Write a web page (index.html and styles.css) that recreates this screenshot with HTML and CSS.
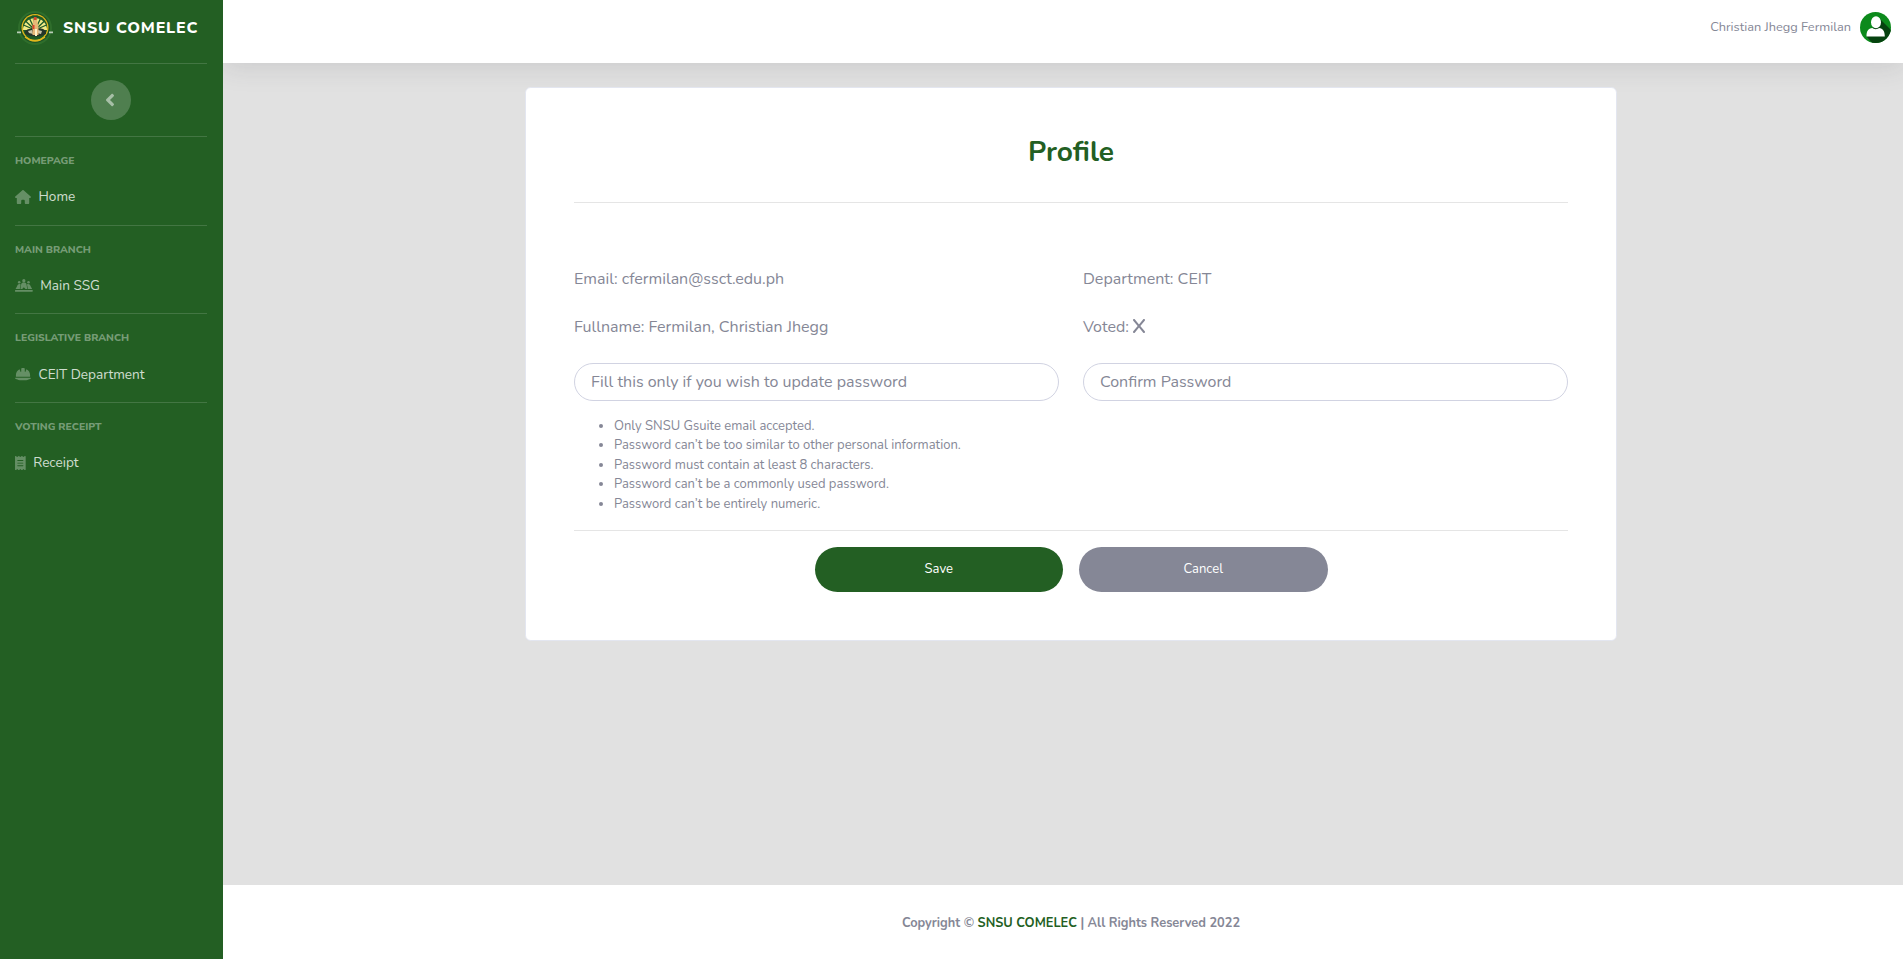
FILE: index.html
```html
<!DOCTYPE html>
<html lang="en">
<head>
<meta charset="utf-8">
<title>SNSU COMELEC - Profile</title>
<link rel="stylesheet" href="styles.css">
</head>
<body>
<div class="wrapper">
  <nav class="sidebar">
    <a class="brand">
      <svg class="brand-logo" viewBox="0 0 36 36">
        <circle cx="18" cy="18" r="17" fill="#2f6e2c"/>
        <circle cx="18" cy="18" r="15" fill="#1d5326"/>
        <circle cx="18" cy="17.5" r="13.5" fill="#e3b81c"/>
        <circle cx="18" cy="17.5" r="12.2" fill="#1f5a25"/>
        <path d="M6 20a12 12 0 0 1 24 0z" fill="#f2ea86"/>
        <path d="M18 20 6.5 15M18 20 8.5 11M18 20 12 7.500M18 20 16 5.500M18 20 20 5.500M18 20 24 7.500M18 20 27.500 11M18 20 29.500 15" stroke="#1d5a2a" stroke-width="1.300"/>
        <path d="M8 21q5-4 10-1 6-4 11 1v3q-10 5-21 0z" fill="#26352a"/>
        <path d="M11 21l4-1 1 4-4-1zM21 20l4 1-1 3-4-1z" fill="#c9c4a8"/>
        <path d="M16.500 8q2-2 3 0l2 9v8h-6v-8z" fill="#e7b878"/>
        <path d="M17 7h2.500v3H17zM15.500 15h2v4h-2z" fill="#d9442b"/>
        <path d="M18 19h2v7h-2z" fill="#fff0c8"/>
        <path d="M8 27q10 8 20 0" fill="none" stroke="#e3b81c" stroke-width="1.400"/>
        <path d="M0 21.500h4v1.700H0zM32 21.500h4v1.700h-4z" fill="#b9cdb8"/>
      </svg>
      <span class="brand-text">SNSU COMELEC</span>
    </a>
    <div class="toggle-row">
      <button class="toggle" aria-label="Collapse sidebar">
        <svg viewBox="0 0 256 512" width="10" height="20"><path d="M31.7 239l136-136c9.400-9.400 24.600-9.400 33.900 0l22.600 22.600c9.400 9.400 9.400 24.600 0 33.900L127.900 256l96.400 96.400c9.400 9.400 9.400 24.600 0 33.900L201.700 409c-9.400 9.400-24.600 9.400-33.900 0l-136-136c-9.500-9.400-9.500-24.600-.1-34z"/></svg>
      </button>
    </div>
    <section class="nav-group">
      <div class="nav-heading">HOMEPAGE</div>
      <a class="nav-link">
        <svg viewBox="0 0 576 512" width="16" height="14.2"><path d="M575.800 255.500c0 18-15 32.100-32 32.100h-32l.7 160.200c0 2.700-.2 5.400-.5 8.100V472c0 22.100-17.900 40-40 40H392c-22.100 0-40-17.900-40-40V384c0-17.700-14.300-32-32-32H256c-17.700 0-32 14.300-32 32v88c0 22.100-17.900 40-40 40H104c-22.100 0-40-17.900-40-40V287.600H32c-18 0-32-14-32-32.100c0-9 3-17 10-24L266.400 8c7-7 15-8 22-8s15 2 21 7L564.800 231.500c8 7 12 15 11 24z"/></svg>
        <span>Home</span>
      </a>
    </section>
    <section class="nav-group">
      <div class="nav-heading">MAIN BRANCH</div>
      <a class="nav-link">
        <svg viewBox="0 0 640 512" width="17.700" height="14.200"><path d="M24 432h592a24 24 0 0 1 0 64H24a24 24 0 0 1 0-64z"/><circle cx="320" cy="96" r="58"/><circle cx="152" cy="156" r="46"/><circle cx="488" cy="156" r="46"/><path d="M196 400l26-170c8-46 40-70 98-70s90 24 98 70l26 170h-64l-60-70-60 70z"/><path d="M20 400l54-104c20-44 44-76 90-76 30 0 42 12 38 36l-28 144zM620 400l-54-104c-20-44-44-76-90-76-30 0-42 12-38 36l28 144z"/></svg>
        <span>Main SSG</span>
      </a>
    </section>
    <section class="nav-group">
      <div class="nav-heading">LEGISLATIVE BRANCH</div>
      <a class="nav-link">
        <svg viewBox="0 0 576 512" width="16" height="14.200"><path d="M256 32c-17.700 0-32 14.300-32 32v100c0 6.600-5.400 12-12 12-5 0-9.400-3-11.200-7.600L165 79C87 117 32 199 32 288v64h512v-64c0-91-54-171-133-209l-35.800 89.400c-1.800 4.600-6.200 7.600-11.200 7.600-6.600 0-12-5.400-12-12V64c0-17.700-14.300-32-32-32zM16.600 384C7.400 384 0 391.400 0 400.600c0 4.700 2 9.200 5.800 11.900C27.500 428.400 111.800 480 288 480s260.500-51.600 282.200-67.500c3.800-2.800 5.800-7.200 5.800-11.900 0-9.200-7.400-16.600-16.600-16.600z"/></svg>
        <span>CEIT Department</span>
      </a>
    </section>
    <section class="nav-group">
      <div class="nav-heading">VOTING RECEIPT</div>
      <a class="nav-link">
        <svg viewBox="0 0 384 512" width="10.700" height="14.200"><path fill-rule="evenodd" d="M14 2.200C22.500-1.700 32.500-.3 39.600 5.800L80 40.400 120.400 5.800c9-7.700 22.300-7.700 31.200 0L192 40.400 232.400 5.800c9-7.700 22.300-7.700 31.200 0L304 40.400 344.400 5.800c7.100-6.100 17.100-7.500 25.600-3.600S384 14.600 384 24V488c0 9.400-5.500 17.900-14 21.800s-18.500 2.500-25.600-3.600L304 471.600l-40.400 34.600c-9 7.700-22.300 7.700-31.200 0L192 471.600l-40.400 34.600c-9 7.700-22.300 7.700-31.200 0L80 471.600 39.600 506.200c-7.100 6.100-17.100 7.500-25.600 3.600S0 497.400 0 488V24C0 14.600 5.500 6.100 14 2.200zM96 144c-8.800 0-16 7.200-16 16s7.200 16 16 16H288c8.800 0 16-7.200 16-16s-7.200-16-16-16zM80 352c0 8.800 7.200 16 16 16H288c8.800 0 16-7.200 16-16s-7.200-16-16-16H96c-8.800 0-16 7.200-16 16zM96 240c-8.800 0-16 7.200-16 16s7.200 16 16 16H288c8.800 0 16-7.200 16-16s-7.200-16-16-16z"/></svg>
        <span>Receipt</span>
      </a>
    </section>
  </nav>

  <div class="content">
    <header class="topbar">
      <span class="user-name">Christian Jhegg Fermilan</span>
      <svg class="avatar" viewBox="0 0 31 31">
        <defs><clipPath id="disc"><circle cx="15.500" cy="15.500" r="15.500"/></clipPath></defs>
        <g clip-path="url(#disc)">
          <path fill="#0c8a1c" d="M0 0h31v31H0z"/>
          <path fill="#06420f" d="M20 7 34 21v12H14L6.500 24.500z"/>
        </g>
        <path fill="#fff" d="M6.500 24.500c0-5.500 1.500-8 6-8.500 1.500 1.500 5 1.500 6.500 0 4 .5 5.800 3 5.800 8.500z"/>
        <ellipse cx="16" cy="10.200" rx="5" ry="6" fill="#fff"/>
      </svg>
    </header>

    <main class="main">
      <div class="card">
        <h1 class="title">Profile</h1>
        <hr class="rule">
        <form class="form">
          <p class="field">Email: cfermilan@ssct.edu.ph</p>
          <p class="field">Department: CEIT</p>
          <p class="field">Fullname: Fermilan, Christian Jhegg</p>
          <p class="field">Voted: <svg class="x-mark" viewBox="0 0 384 512" width="12" height="16"><path d="M376.600 84.500c11.300-13.600 9.500-33.800-4.100-45.100s-33.800-9.500-45.100 4.100L192 206 56.600 43.500C45.300 29.900 25.100 28.100 11.500 39.400S-3.900 70.900 7.400 84.500L150.300 256 7.400 427.500c-11.300 13.600-9.500 33.800 4.100 45.100s33.800 9.500 45.100-4.100L192 306 327.400 468.500c11.300 13.600 31.500 15.400 45.100 4.100s15.400-31.500 4.100-45.100L233.700 256 376.600 84.500z"/></svg></p>
          <input class="input" type="password" placeholder="Fill this only if you wish to update password">
          <input class="input" type="password" placeholder="Confirm Password">
        </form>
        <ul class="hints">
          <li>Only SNSU Gsuite email accepted.</li>
          <li>Password can’t be too similar to other personal information.</li>
          <li>Password must contain at least 8 characters.</li>
          <li>Password can’t be a commonly used password.</li>
          <li>Password can’t be entirely numeric.</li>
        </ul>
        <hr class="rule">
        <div class="actions">
          <button class="btn btn-save">Save</button>
          <button class="btn btn-cancel">Cancel</button>
        </div>
      </div>
    </main>

    <footer class="footer">Copyright © <a class="footer-link">SNSU COMELEC</a> | All Rights Reserved 2022</footer>
  </div>
</div>
</body>
</html>
```
FILE: styles.css
```css
* { box-sizing: border-box; }

body {
  margin: 0;
  font: 400 16px/1.5 Nunito, Lato, sans-serif;
  color: #858796;
  background: #e1e1e1;
}

.wrapper { display: flex; height: 959px; overflow: hidden; }

/* Sidebar */
.sidebar {
  position: relative;
  z-index: 2;
  flex: 0 0 223px;
  padding: 0 16px 0 15px;
  background: #235f23;
}
.brand {
  display: flex;
  align-items: center;
  gap: 10px;
  height: 63px;
  padding: 0 0 8px 2px;
}
.brand-logo { width: 36px; height: 36px; flex: none; }
.brand-text {
  font-size: 16px;
  font-weight: 800;
  letter-spacing: 0.8px;
  color: #fff;
  white-space: nowrap;
}
.toggle-row {
  display: flex;
  justify-content: center;
  height: 73px;
  padding-top: 16px;
  border-top: 1px solid rgba(255, 255, 255, .15);
}
.toggle {
  display: grid;
  place-items: center;
  width: 40px;
  height: 40px;
  padding: 0 2px 0 0;
  border: 0;
  border-radius: 50%;
  background: rgba(255, 255, 255, .2);
}
.toggle svg { fill: rgba(255, 255, 255, .5); }
.nav-group {
  height: 88.6px;
  padding-top: 16px;
  border-top: 1px solid rgba(255, 255, 255, .15);
}
.nav-heading {
  font-size: 10.4px;
  font-weight: 800;
  line-height: 16px;
  color: rgba(255, 255, 255, .4);
}
.nav-link {
  display: flex;
  align-items: center;
  gap: 7.5px;
  margin-top: 18.4px;
  font-size: 13.6px;
  line-height: 20.4px;
  color: rgba(255, 255, 255, .8);
}
.nav-link svg { fill: rgba(255, 255, 255, .3); margin-bottom: 1.4px; }

/* Page column */
.content { flex: 1; display: flex; flex-direction: column; min-width: 0; }
.topbar {
  display: flex;
  justify-content: flex-end;
  align-items: center;
  gap: 8.5px;
  flex: 0 0 63px;
  padding: 0 12.5px 7.5px 0;
  background: #fff;
  box-shadow: 0 2.4px 28px rgba(58, 59, 69, .15);
}
.user-name { font-size: 12.8px; }
.avatar { width: 31px; height: 31px; }

.main { flex: 1; padding: 24px 286px 0 302px; }
.card {
  width: 1092px;
  height: 554px;
  padding: 47px 48px;
  border: 1px solid #e3e6f0;
  border-radius: 5.6px;
  background: #fff;
}
.title {
  margin: 0;
  font-size: 28px;
  font-weight: 700;
  line-height: 34px;
  text-align: center;
  color: #235f23;
}
.rule { height: 1px; margin: 0; border: 0; background: rgba(0, 0, 0, .1); }
.title + .rule { margin-top: 33px; }

.form {
  display: grid;
  grid-template-columns: 1fr 1fr;
  column-gap: 24px;
  margin-top: 64px;
}
.field { height: 48px; margin: 0; line-height: 24px; }
.x-mark { fill: #858796; vertical-align: -2px; }
.input {
  height: 38px;
  padding: 6px 16px;
  border: 1px solid #d1d3e2;
  border-radius: 160px;
  font: inherit;
  outline: 0;
}
.input::placeholder { color: #858796; opacity: 1; }

.hints {
  margin: 15.6px 0 15.9px;
  padding-left: 40px;
  font-size: 13px;
  line-height: 19.5px;
}
.actions { display: flex; justify-content: center; gap: 16px; margin-top: 16px; }
.btn {
  width: 248.5px;
  height: 45px;
  padding: 0;
  border: 0;
  border-radius: 160px;
  font: 400 13px/19px Nunito, Lato, sans-serif;
  color: #fff;
}
.btn-save { background: #235f23; }
.btn-cancel { background: #858796; }

.footer {
  flex: 0 0 74px;
  padding: 29px 0 0 16px;
  font-size: 12.8px;
  font-weight: 700;
  line-height: 19.2px;
  text-align: center;
  background: #fff;
}
.footer-link { color: #235f23; }
```
